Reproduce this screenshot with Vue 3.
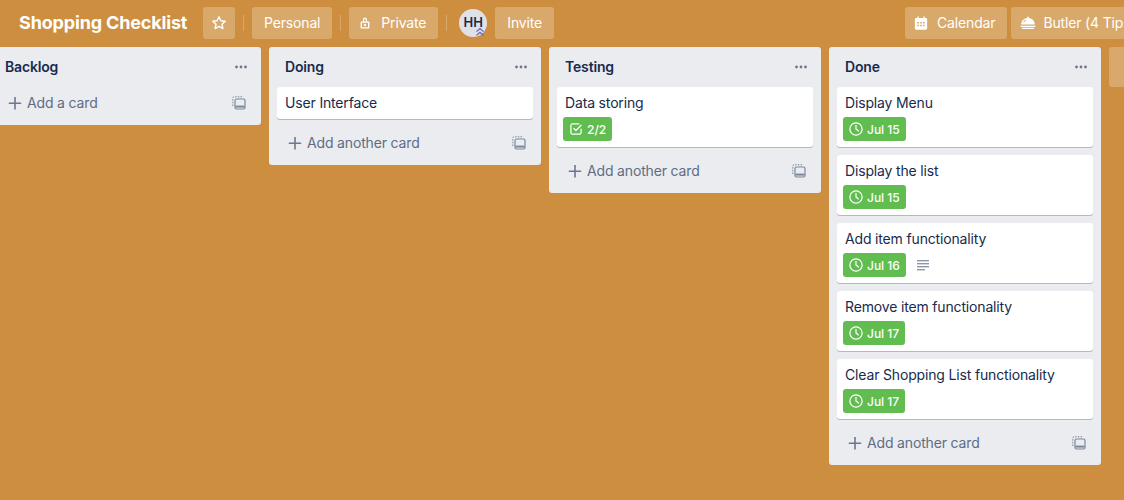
<template>
  <div class="page">
    <header class="board-header">
      <h1 class="board-title">Shopping Checklist</h1>
      <button class="hbtn star-btn" aria-label="Star">
        <svg width="16" height="16" viewBox="0 0 16 16" fill="none" stroke="#fff" stroke-width="1.4" stroke-linejoin="round"><path d="M8 1.8l1.9 4 4.3.5-3.2 3 .9 4.3L8 11.4l-3.9 2.2.9-4.3-3.2-3 4.3-.5z"/></svg>
      </button>
      <span class="divider"></span>
      <button class="hbtn">Personal</button>
      <span class="divider"></span>
      <button class="hbtn">
        <svg class="hicon lock" width="10" height="12" viewBox="0 0 10 12"><path fill="#fff" fill-rule="evenodd" d="M3 4.4V2.6a2 2 0 0 1 4 0v1.8h1.4c.6 0 1 .4 1 1v5.2c0 .6-.4 1-1 1H1.600c-.6 0-1-.4-1-1V5.400c0-.6.4-1 1-1zm1.200 0h1.600V2.600a.8.8 0 0 0-1.600 0zM2 5.800v4.400h6V5.800zM5 6.800a1.200 1.200 0 1 1 0 2.400 1.200 1.200 0 0 1 0-2.400z"/></svg>
        Private
      </button>
      <span class="divider"></span>
      <div class="avatar">
        HH
        <svg class="avatar-badge" width="10" height="10" viewBox="0 0 10 10" fill="none" stroke="#5a5fc8" stroke-width="1.2"><path d="M1.500 4.600L5 1.600l3.500 3M1.500 8.400L5 5.400l3.500 3"/></svg>
      </div>
      <button class="hbtn invite">Invite</button>
      <button class="hbtn calendar">
        <svg class="hicon" width="14" height="14" viewBox="0 0 14 15"><path fill="#fff" fill-rule="evenodd" d="M3 .5h1.400v1.700h5.200V.5H11v1.700h1c.9 0 1.600.7 1.600 1.500v9.500c0 .8-.7 1.500-1.600 1.500H2c-.9 0-1.600-.7-1.600-1.500V3.700c0-.8.7-1.500 1.600-1.500h1zM3 6.500v1.600h1.800V6.500zm3.100 0v1.600h1.800V6.500zm3.100 0v1.600H11V6.500zM3 9.500v1.600h1.800V9.500zm3.100 0v1.600h1.800V9.500zm3.100 0v1.600H11V9.500z"/></svg>
        Calendar
      </button>
      <button class="hbtn butler">
        <svg class="hicon" width="16" height="14" viewBox="0 0 16 14"><path fill="#fff" fill-rule="evenodd" d="M7.200 1.400a.8.8 0 1 1 1.600 0v.7c3.400.4 5.700 3 6.100 6.400H1.100C1.500 5.100 3.800 2.500 7.200 2.100zM4 6.600c.4-1 1.300-1.900 2.500-2.400l-.3-.6C4.700 4.200 3.700 5.200 3.300 6.400zM.6 9.800h14.800v1.100H.6zM1.600 11.800h12.800c-.3.800-1 1.200-1.800 1.200H3.400c-.8 0-1.500-.4-1.800-1.200z"/></svg>
        Butler (4 Tips)
      </button>
    </header>

    <main class="board">
      <section v-for="list in lists" :key="list.name" class="list">
        <div class="list-head">
          <h2>{{ list.name }}</h2>
          <svg width="12" height="4" viewBox="0 0 12 4" fill="#6b778c"><circle cx="1.500" cy="2" r="1.400"/><circle cx="6" cy="2" r="1.400"/><circle cx="10.500" cy="2" r="1.400"/></svg>
        </div>
        <article v-for="card in list.cards" :key="card.title" class="card">
          <div class="card-title">{{ card.title }}</div>
          <div v-if="card.badge" class="badges">
            <span class="badge">
              <svg v-if="card.check" width="14" height="14" viewBox="0 0 16 16" fill="none" stroke="#fff" stroke-width="1.400" stroke-linecap="round" stroke-linejoin="round"><path d="M13.800 8.200v4c0 .9-.7 1.600-1.600 1.600H3.800c-.9 0-1.600-.7-1.600-1.600V3.800c0-.9.7-1.600 1.600-1.600h7.400"/><path d="M5.600 7.400l2.300 2.300 5.900-6"/></svg>
              <svg v-else width="14" height="14" viewBox="0 0 16 16" fill="none" stroke="#fff" stroke-width="1.400" stroke-linecap="round" stroke-linejoin="round"><circle cx="8" cy="8" r="7"/><path d="M8 3.800V8l2.800 2.200"/></svg>
              {{ card.badge }}
            </span>
            <svg v-if="card.desc" class="desc" width="14" height="12" viewBox="0 0 14 12" fill="#8d96a8"><rect x="1" y="1" width="12" height="1.400"/><rect x="1" y="4" width="12" height="1.400"/><rect x="1" y="7" width="12" height="1.400"/><rect x="1" y="10" width="8" height="1.400"/></svg>
          </div>
        </article>
        <div class="composer">
          <span class="add">
            <svg width="24" height="24" viewBox="0 0 24 24" fill="none" stroke="#6b778c" stroke-width="1.600"><path d="M12 6v12.400M5.800 12.200h12.400"/></svg>
            {{ list.add }}
          </span>
          <span class="tpl">
            <svg width="14" height="14" viewBox="0 0 14 14" fill="none" stroke="#7a869a" stroke-width="1"><path stroke-dasharray="1.500 1.200" d="M.8 10V2c0-.7.5-1.200 1.200-1.200h8.500"/><rect x="3" y="3" width="10" height="10" rx="1.500" stroke-width="1.200"/><rect x="3.500" y="9.600" width="9" height="2" fill="#7a869a" stroke="none"/></svg>
          </span>
        </div>
      </section>
      <div class="add-list"></div>
    </main>
  </div>
</template>

<script setup>
const lists = [
  { name: 'Backlog', add: 'Add a card', cards: [] },
  { name: 'Doing', add: 'Add another card', cards: [{ title: 'User Interface' }] },
  { name: 'Testing', add: 'Add another card', cards: [{ title: 'Data storing', badge: '2/2', check: true }] },
  {
    name: 'Done',
    add: 'Add another card',
    cards: [
      { title: 'Display Menu', badge: 'Jul 15' },
      { title: 'Display the list', badge: 'Jul 15' },
      { title: 'Add item functionality', badge: 'Jul 16', desc: true },
      { title: 'Remove item functionality', badge: 'Jul 17' },
      { title: 'Clear Shopping List functionality', badge: 'Jul 17' }
    ]
  }
]
</script>

<style>
html, body {
  margin: 0;
  background: #cd8f3f;
  overflow: hidden;
}
</style>

<style scoped>
.page {
  width: 1124px;
  height: 500px;
  overflow: hidden;
  background: #cd8f3f;
  font-family: Inter, "Liberation Sans", sans-serif;
  font-size: 14px;
  letter-spacing: -0.16px;
  color: #172b4d;
}

.board-header {
  display: flex;
  align-items: center;
  height: 32px;
  padding: 7px 0 8px 19px;
}

.board-title {
  margin: 0 16px 0 0;
  width: 168px;
  flex-shrink: 0;
  font-size: 18px;
  line-height: 32px;
  font-weight: 700;
  color: #fff;
  white-space: nowrap;
}

.hbtn {
  display: flex;
  align-items: center;
  flex-shrink: 0;
  box-sizing: border-box;
  height: 32px;
  padding: 0 12px 1px;
  border: 0;
  border-radius: 3px;
  background: rgba(255, 255, 255, 0.24);
  color: #fff;
  font: inherit;
  letter-spacing: inherit;
  white-space: nowrap;
}

.star-btn {
  width: 32px;
  padding: 0;
  justify-content: center;
}

.hicon {
  margin-right: 9px;
  margin-left: -3px;
}

.lock {
  margin-left: -1px;
  margin-right: 11px;
}

.divider {
  flex-shrink: 0;
  width: 1px;
  height: 16px;
  margin: 0 8px;
  background: rgba(255, 255, 255, 0.24);
}

.avatar {
  position: relative;
  flex-shrink: 0;
  width: 28px;
  height: 28px;
  margin: 0 8px 0 4px;
  border-radius: 50%;
  background: #dfe1e6;
  font-size: 13px;
  font-weight: 600;
  letter-spacing: 0;
  line-height: 26px;
  text-align: center;
}

.avatar-badge {
  position: absolute;
  right: 2px;
  bottom: 0;
}

.calendar {
  margin-left: 351px;
}

.butler {
  margin-left: 4px;
}

.butler .hicon {
  margin-right: 7px;
}

.board {
  display: flex;
  align-items: flex-start;
  gap: 8px;
  margin-left: -11px;
}

.list {
  flex-shrink: 0;
  width: 272px;
  box-sizing: border-box;
  padding: 0 8px;
  border-radius: 3px;
  background: #ebecf0;
}

.list-head {
  display: flex;
  align-items: center;
  justify-content: space-between;
  height: 40px;
  padding: 0 6px 0 8px;
}

.list-head h2 {
  margin: 0;
  font-size: 14px;
  font-weight: 600;
  line-height: 20px;
}

.card {
  margin-bottom: 8px;
  padding: 6px 8px;
  border-radius: 3px;
  background: #fff;
  box-shadow: 0 1px 0 rgba(9, 30, 66, 0.25);
}

.card-title {
  line-height: 20px;
}

.badges {
  display: flex;
  align-items: center;
  margin: 4px 0 0 -2px;
}

.badge {
  display: flex;
  align-items: center;
  gap: 4px;
  height: 24px;
  padding: 0 6px;
  border-radius: 3px;
  background: #61bd4f;
  color: #fff;
  font-size: 12px;
  font-weight: 500;
  letter-spacing: 0;
}

.desc {
  margin-left: 10px;
}

.composer {
  display: flex;
  align-items: center;
  justify-content: space-between;
  height: 32px;
  margin-bottom: 6px;
  padding-left: 6px;
  color: #5e6c84;
}

.add {
  display: flex;
  align-items: center;
  line-height: 22px;
}

.tpl {
  display: flex;
  align-items: center;
  justify-content: center;
  width: 28px;
  height: 28px;
}

.add-list {
  flex-shrink: 0;
  width: 272px;
  height: 40px;
  border-radius: 3px;
  background: rgba(255, 255, 255, 0.24);
}
</style>
